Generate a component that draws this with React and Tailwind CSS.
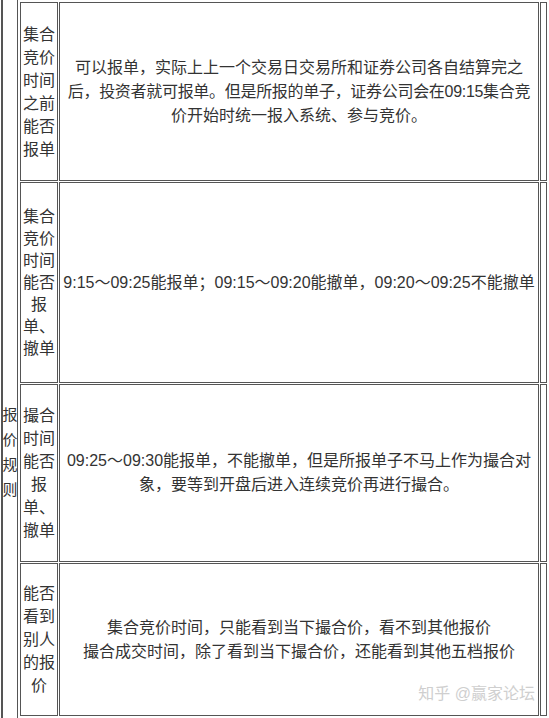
export default function App() {
  const font = { fontFamily: '"Liberation Sans", "Noto Sans CJK SC", sans-serif' };
  const cell2 = "w-[38px] shrink-0 border border-[#555] flex items-center justify-center text-center px-[2px] leading-[23px] break-all";
  const cell3 = "w-[480px] shrink-0 border border-[#555] flex flex-col items-center justify-center text-center px-px leading-[24px] whitespace-nowrap";
  const cell4 = "w-[7px] shrink-0 border border-[#555]";
  return (
    <div className="w-[549px] h-[718px] overflow-hidden bg-white relative flex text-[16px] text-[#333]" style={font}>
      <div className="ml-[1px] w-[17px] shrink-0 border-l-2 border-r border-[#555] text-[15px] leading-[25px] pt-[402px] flex flex-col items-center">
        <span>报</span>
        <span>价</span>
        <span>规</span>
        <span>则</span>
      </div>
      <div className="ml-[2px] pt-[2px] flex flex-col gap-px">
        <div className="flex gap-px h-[179px]">
          <div className={cell2}>集合竞价时间之前能否报单</div>
          <div className={cell3}>
            <span>可以报单，实际上上一个交易日交易所和证券公司各自结算完之</span>
            <span className="tracking-[-0.3px]">后，投资者就可报单。但是所报的单子，证券公司会在09:15集合竞</span>
            <span>价开始时统一报入系统、参与竞价。</span>
          </div>
          <div className={cell4}></div>
        </div>
        <div className="flex gap-px h-[201px]">
          <div className={cell2 + " !leading-[22px]"}>集合竞价时间能否报单、撤单</div>
          <div className={cell3}>
            <span>9:15～09:25能报单；09:15～09:20能撤单，09:20～09:25不能撤单</span>
          </div>
          <div className={cell4}></div>
        </div>
        <div className="flex gap-px h-[178px]">
          <div className={cell2}>撮合时间能否报单、撤单</div>
          <div className={cell3}>
            <span>09:25～09:30能报单，不能撤单，但是所报单子不马上作为撮合对</span>
            <span>象，要等到开盘后进入连续竞价再进行撮合。</span>
          </div>
          <div className={cell4}></div>
        </div>
        <div className="flex gap-px h-[153px]">
          <div className={cell2}>能否看到别人的报价</div>
          <div className={cell3}>
            <span>集合竞价时间，只能看到当下撮合价，看不到其他报价</span>
            <span>撮合成交时间，除了看到当下撮合价，还能看到其他五档报价</span>
          </div>
          <div className={cell4}></div>
        </div>
      </div>
      <div className="absolute right-[14px] bottom-[15px] text-[16px] leading-[18px] text-[#cfcfcf]">知乎 @赢家论坛</div>
    </div>
  );
}
